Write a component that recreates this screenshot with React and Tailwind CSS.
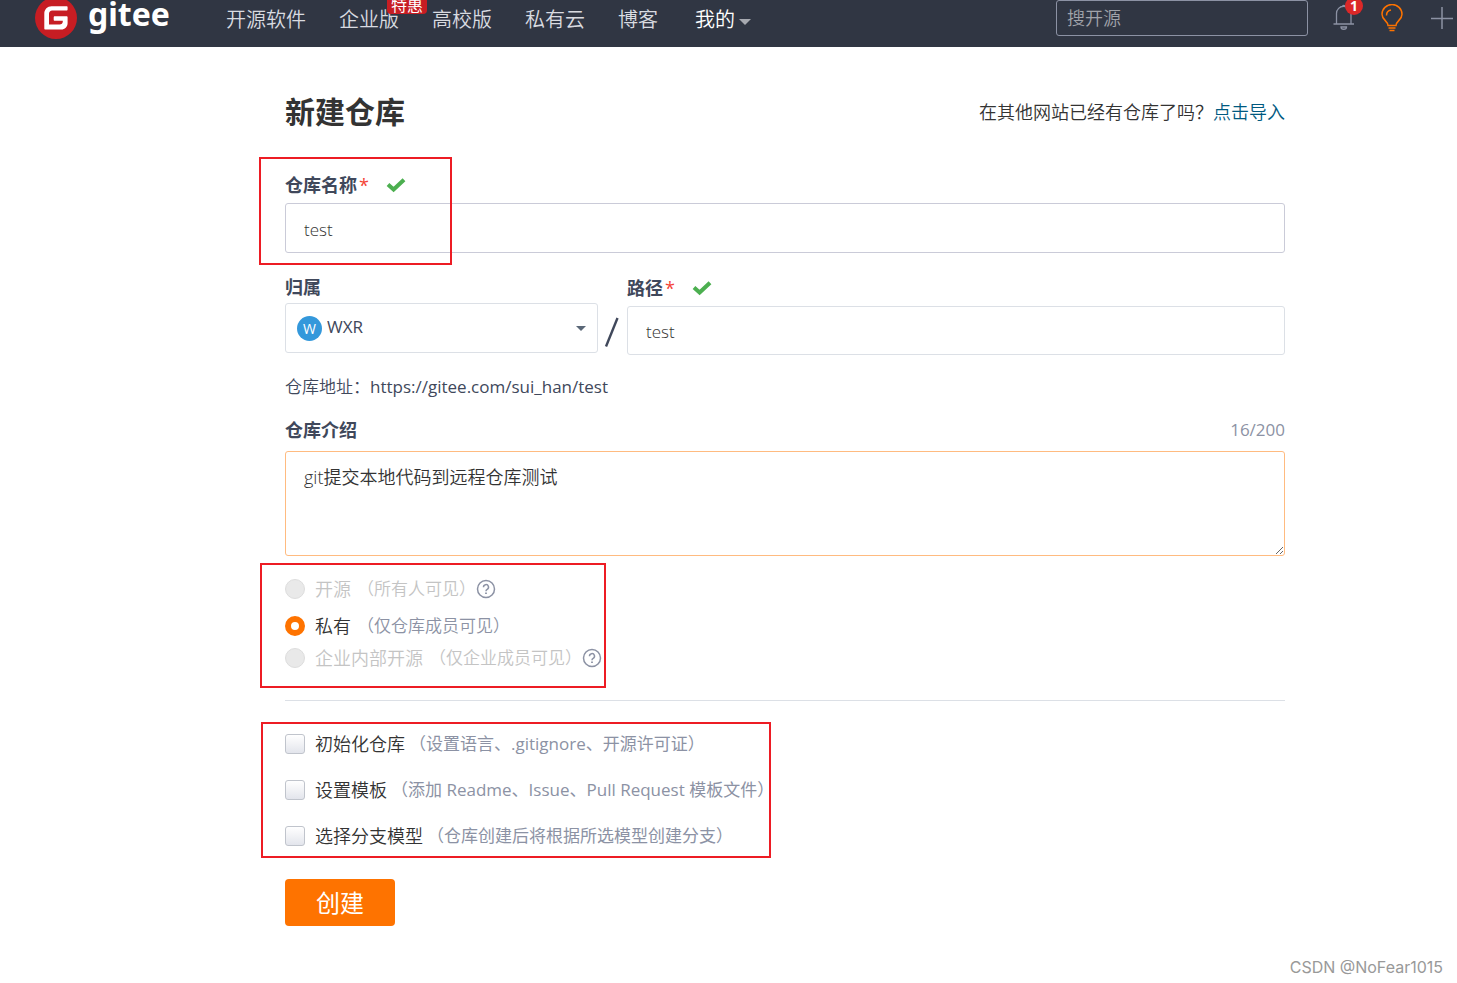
import { useState } from 'react';

const FONT = "font-['Open_Sans','Noto_Sans_CJK_SC',sans-serif]";

function Logo() {
  return (
    <a href="#home" aria-label="gitee" className="flex items-center gap-[11px] text-white">
      <svg viewBox="0 0 42 42" className="size-[42px]" aria-hidden="true">
        <circle cx="21" cy="21" r="21" fill="#c71d23" />
        <path
          d="M31.6 9.3H16.5c-4 0-7.2 3.2-7.2 7.2v15.1c0 .6.5 1 1 1h16c3.500 0 6.300-2.800 6.300-6.300v-6.100c0-.6-.5-1-1-1H19.700c-.6 0-1 .5-1 1v2.600c0 .6.400 1 1 1h8.100v.6c0 1.700-1.400 3.100-3.100 3.100H14V16.700c0-1.700 1.400-3.100 3.100-3.100h14.500c.6 0 1-.5 1-1v-2.300c0-.6-.4-1-1-1z"
          fill="#fff"
        />
      </svg>
      <span className="pb-2 font-['Noto_Sans',sans-serif] text-[32px] leading-9 font-bold">gitee</span>
    </a>
  );
}

function Bell() {
  return (
    <svg viewBox="0 0 22 26" className="h-[26px] w-[22px]" fill="none" stroke="#8c92a4" strokeWidth="1.300" aria-hidden="true">
      <path d="M0.500 20h20.500M3.500 20V9.500a7.200 7.200 0 0 1 14.500 0V20M9.200 3a1.600 1.600 0 0 1 3.200 0M8 23c0 3 5.500 3 5.500 0z" />
    </svg>
  );
}

function Bulb() {
  return (
    <svg viewBox="0 0 22 28" className="h-7 w-[22px]" fill="none" stroke="#fe7300" strokeWidth="1.500" aria-hidden="true">
      <path d="M7 21.500c0-4.500-6-5.500-6-11.300a10 9.700 0 0 1 20 0c0 5.800-6 6.800-6 11.300zM7.500 24h7M8.500 26.500h5M5.500 11.500c0-3 1.500-5 4.500-5.500" />
    </svg>
  );
}

function Check() {
  return (
    <svg viewBox="0 0 20 16" className="h-4 w-5" aria-hidden="true">
      <path d="M2 7.500 7.600 12.500 18 2.700" fill="none" stroke="#4caf50" strokeWidth="4" />
    </svg>
  );
}

function Help({ label }) {
  return (
    <button type="button" aria-label={label}>
      <svg viewBox="0 0 20 20" className="size-5" fill="none" stroke="#8c92a4" strokeWidth="1.500" aria-hidden="true">
        <circle cx="10" cy="10" r="8.500" />
        <path d="M7.500 8.200a2.500 2.500 0 1 1 3.700 2.100c-.8.500-1.200.9-1.200 1.900" />
        <path d="M10 13.400v1.600" strokeWidth="1.800" />
      </svg>
    </button>
  );
}

function Mark({ className }) {
  return <div aria-hidden="true" className={`pointer-events-none absolute border-2 border-[#ed1c24] ${className}`} />;
}

function Label({ htmlFor, children, required }) {
  return (
    <label htmlFor={htmlFor} className="flex h-6 items-center text-lg leading-6 font-bold text-[#40485b]">
      {children}
      {required && (
        <>
          <span className="ml-0.5 font-normal text-[#f44336]">*</span>
          <span className="ml-[17px]"><Check /></span>
        </>
      )}
    </label>
  );
}

const NAV = ['开源软件', '企业版', '高校版', '私有云', '博客'];

const VISIBILITY = [
  { id: 'public', name: '开源', note: '（所有人可见）', disabled: true, help: true, row: 'h-[37px]' },
  { id: 'private', name: '私有', note: '（仅仓库成员可见）', row: 'h-8' },
  { id: 'inner', name: '企业内部开源', note: '（仅企业成员可见）', disabled: true, help: true, row: 'h-[34px]' },
];

const OPTIONS = [
  { id: 'init', name: '初始化仓库', note: '（设置语言、.gitignore、开源许可证）' },
  { id: 'template', name: '设置模板', note: '（添加 Readme、Issue、Pull Request 模板文件）' },
  { id: 'branch', name: '选择分支模型', note: '（仓库创建后将根据所选模型创建分支）' },
];

export default function App() {
  const [name, setName] = useState('test');
  const [path, setPath] = useState('test');
  const [intro, setIntro] = useState('git提交本地代码到远程仓库测试');
  const [visibility, setVisibility] = useState('private');

  return (
    <div className={`flex min-h-screen flex-col bg-white font-[350] text-[#333] ${FONT}`}>
      <header className="flex h-[47px] items-start bg-[#303643] pl-[35px]">
        <div className="-mt-1 shrink-0"><Logo /></div>
        <nav className="ml-14 flex h-10 flex-1 items-center gap-[33px] text-xl leading-10 whitespace-nowrap text-[#d9dbe0]">
          {NAV.map((item) => (
            <a key={item} href="#nav" className="relative">
              {item}
              {item === '企业版' && (
                <span className="absolute -top-2 -right-7 h-[22px] rounded-sm bg-[#c71d23] px-1 text-base leading-[26px] font-normal text-white">特惠</span>
              )}
            </a>
          ))}
          <button type="button" className="ml-1 flex items-center gap-1 text-white">
            我的
            <svg viewBox="0 0 12 6" className="mt-1 h-1.5 w-3" aria-hidden="true"><path d="M0 0h12L6 6z" fill="#a6a9b0" /></svg>
          </button>
        </nav>
        <input
          aria-label="搜开源"
          placeholder="搜开源"
          className="h-9 w-[252px] rounded-[3px] border border-[#8c92a4] bg-transparent px-2.5 text-lg text-white placeholder:text-[#a0a3aa]"
        />
        <button type="button" aria-label="通知" className="relative mt-1 ml-[25px]">
          <Bell />
          <span className="absolute -top-[7px] -right-2 flex size-[18px] items-center justify-center rounded-full bg-[#db2828] text-sm font-bold text-white">1</span>
        </button>
        <button type="button" aria-label="提示" className="mt-1 ml-[26px]"><Bulb /></button>
        <button type="button" aria-label="新建" className="mt-[7px] mr-1 ml-7">
          <svg viewBox="0 0 22 22" className="size-[22px]" stroke="#8c92a4" strokeWidth="1.500" aria-hidden="true"><path d="M0 11.500h22M11 0v22" /></svg>
        </button>
      </header>

      <main className="flex-1 pt-[45px] pr-[172px] pl-[285px]">
        <div className="flex h-10 items-center justify-between">
          <h1 className="text-3xl font-bold">新建仓库</h1>
          <p className="flex text-lg">
            在其他网站已经有仓库了吗？
            <a href="#import" className="text-[#005980]">点击导入</a>
          </p>
        </div>

        <form onSubmit={(e) => e.preventDefault()}>
          <section className="relative mt-[41px]">
            <Label htmlFor="name" required>仓库名称</Label>
            <input
              id="name"
              value={name}
              onChange={(e) => setName(e.target.value)}
              className="mt-1.5 block h-[50px] w-full rounded-[3px] border border-[#cacbd8] px-[18px] pt-0.5 text-[17px] outline-none"
            />
            <Mark className="-top-4 -left-[26px] h-[108px] w-[193px]" />
          </section>

          <section className="mt-[22px] flex items-end">
            <div className="w-[313px]">
              <Label htmlFor="owner">归属</Label>
              <div className="relative mt-1 mb-0.5">
                <select id="owner" className="block h-[50px] w-full appearance-none rounded-[3px] border border-[#dce0e6] bg-white pb-0.5 pl-[41px] text-[17px] font-normal text-[#40485b] outline-none">
                  <option>WXR</option>
                </select>
                <span aria-hidden="true" className="pointer-events-none absolute top-[13px] left-3 flex size-[25px] items-center justify-center rounded-full bg-[#3498db] text-sm font-normal text-white">W</span>
                <svg viewBox="0 0 10 5" className="pointer-events-none absolute top-[23px] right-3 h-[5px] w-[10px]" aria-hidden="true"><path d="M0 0h10L5 5z" fill="#5a6777" /></svg>
              </div>
            </div>
            <svg viewBox="0 0 29 50" className="h-[50px] w-[29px]" aria-hidden="true"><path d="M8 41.500 19.500 13" stroke="#40485b" strokeWidth="2.400" /></svg>
            <div className="flex-1">
              <Label htmlFor="path" required>路径</Label>
              <input
                id="path"
                value={path}
                onChange={(e) => setPath(e.target.value)}
                className="mt-1.5 block h-[49px] w-full rounded-[3px] border border-[#dce0e6] px-[18px] pt-0.5 text-[17px] outline-none"
              />
            </div>
          </section>

          <p className="mt-5 text-[17px] leading-6 font-normal text-[#40485b]"><span className="font-[350]">仓库地址：</span>https://gitee.com/sui_han/test</p>

          <section className="mt-[19px]">
            <div className="flex items-center justify-between">
              <Label htmlFor="intro">仓库介绍</Label>
              <span className="text-[17px] leading-6 font-normal text-[#8c92a4]">16/200</span>
            </div>
            <textarea
              id="intro"
              value={intro}
              onChange={(e) => setIntro(e.target.value)}
              className="mt-[9px] block h-[105px] w-full rounded-[3px] border border-[#ffbb80] px-[18px] py-3 text-lg leading-[26px] outline-none"
            />
          </section>

          <fieldset className="relative mt-[15px]">
            {VISIBILITY.map((v) => (
              <div key={v.id} className={`flex items-start ${v.row}`}>
                <label className={`flex h-9 items-center text-lg leading-6 ${v.disabled ? 'text-[#c4c4c4]' : ''}`}>
                  <input
                    type="radio"
                    name="visibility"
                    checked={visibility === v.id}
                    disabled={v.disabled}
                    onChange={() => setVisibility(v.id)}
                    className="mr-2.5 size-5 appearance-none rounded-full border border-[#ddd] bg-[#e9e9e9] checked:border-[6px] checked:border-[#fe7300] checked:bg-white"
                  />
                  {v.name}
                  <span className={`ml-1.5 text-[17px] ${v.disabled ? '' : 'text-[#8c92a4]'}`}>{v.note}</span>
                </label>
                {v.help && <div className="flex h-9 items-center"><Help label={`${v.name}说明`} /></div>}
              </div>
            ))}
            <Mark className="-top-2 -left-[25px] h-[125px] w-[346px]" />
          </fieldset>

          <hr className="mt-[26px] border-[#dce0e6]" />

          <fieldset className="relative mt-[31px] flex flex-col gap-[22px]">
            {OPTIONS.map((o) => (
              <label key={o.id} className="flex h-6 items-center text-lg leading-6 whitespace-nowrap">
                <input
                  type="checkbox"
                  className="mr-2.5 size-5 appearance-none rounded-[3px] border border-[#c0c4cc] bg-linear-to-b from-white to-[#e3e5ec] checked:bg-[#fe7300]"
                />
                {o.name}
                <span className="ml-1 text-[17px] font-normal text-[#8c92a4]">{o.note}</span>
              </label>
            ))}
            <Mark className="-top-[10px] -left-6 h-[136px] w-[510px]" />
          </fieldset>

          <button type="submit" className="mt-[31px] h-[47px] w-[110px] rounded-sm bg-[#fe7300] text-2xl font-normal text-white">创建</button>
        </form>
      </main>

      <footer className="pr-[14px] pb-1 text-right font-['Inter',sans-serif] text-base leading-6 font-normal text-[#999]">CSDN @NoFear1015</footer>
    </div>
  );
}
